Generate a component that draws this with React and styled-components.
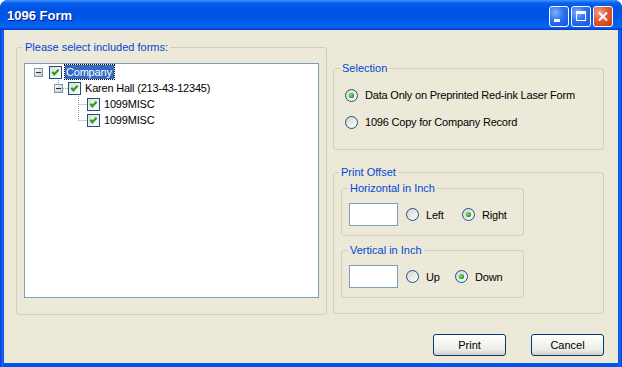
import React from 'react';
import styled, { createGlobalStyle } from 'styled-components';

const GlobalStyle = createGlobalStyle`
  html, body { margin: 0; padding: 0; background: #fff; }
  body { font-family: "Liberation Sans", Arial, sans-serif; font-size: 11px; color: #000; }
  * { box-sizing: border-box; }
`;

const Window = styled.div`
  width: 622px;
  height: 367px;
  display: flex;
  flex-direction: column;
  background: linear-gradient(to right, #0831D9 0, #166AEE 2px, #0055EA 4px, #0055EA 618px, #166AEE 620px, #0831D9 622px);
  border-radius: 8px 8px 0 0;
  overflow: hidden;
`;

const TitleBar = styled.div`
  height: 30px;
  flex: none;
  display: flex;
  align-items: center;
  justify-content: space-between;
  padding: 0 9px 0 7px;
  background: linear-gradient(to bottom, #3D95FF 0, #0A5FEE 3px, #0054E3 8px, #0055E5 18px, #0461F0 25px, #0A66F5 27px, #0047D8 29px, #0039C8 30px);
`;

const TitleText = styled.div`
  color: #fff;
  font: bold 13px "Liberation Sans", Arial, sans-serif;
  text-shadow: 1px 1px 0 #0A1883;
  padding-top: 1px;
`;

const CaptionButtons = styled.div`
  display: flex;
  gap: 2px;
  padding-top: 2px;
`;

const CaptionButton = styled.div`
  width: 20px;
  height: 21px;
  border: 1px solid #fff;
  border-radius: 3px;
  display: flex;
  align-items: center;
  justify-content: center;
  background: ${p => p.$close
    ? 'radial-gradient(circle at 30% 30%, #F0A48A 0, #E15B34 45%, #C2351A 100%)'
    : 'radial-gradient(circle at 30% 30%, #7FB2FF 0, #2B72F2 45%, #1650DA 100%)'};
`;

const Client = styled.div`
  flex: 1;
  margin: 0 4px 4px;
  background: #ECE9D8;
  display: flex;
  flex-direction: column;
`;

const Body = styled.div`
  display: flex;
  gap: 6px;
  padding: 11px 14px 0 12px;
`;

const GroupBox = styled.fieldset`
  margin: 0;
  min-width: 0;
  width: ${p => p.$w}px;
  height: ${p => p.$h}px;
  padding: ${p => p.$pad};
  border: 1px solid #D0D0BF;
  border-radius: 3px;
`;

const Legend = styled.legend`
  color: #0046D5;
  padding: 0 2px;
  margin-left: ${p => p.$ml ?? -1}px;
  line-height: 13px;
  font-size: 11px;
`;

const TreeBox = styled.div`
  height: 235px;
  background: #fff;
  border: 1px solid #7F9DB9;
`;

const TreeRow = styled.div`
  display: flex;
  align-items: center;
  height: 16px;
  padding-left: ${p => 5 + p.$level * 19}px;
`;

const NodeLabel = styled.span`
  margin-left: 3px;
  padding: 0 2px 0 1px;
  line-height: 14px;
  white-space: nowrap;
  font-size: 11px;
  letter-spacing: -0.2px;
  background: ${p => (p.$selected ? '#316AC5' : 'transparent')};
  color: ${p => (p.$selected ? '#fff' : '#000')};
  outline: ${p => (p.$selected ? '1px dotted #000' : 'none')};
`;

const RightColumn = styled.div`
  width: 271px;
  display: flex;
  flex-direction: column;
  gap: 16px;
  padding-top: 21px;
`;

const RadioList = styled.div`
  display: flex;
  flex-direction: column;
  gap: 11px;
`;

const Option = styled.label`
  display: flex;
  align-items: center;
  gap: 7px;
  height: 16px;
  width: ${p => (p.$w ? `${p.$w}px` : 'auto')};
  white-space: nowrap;
  font-size: 11px;
  letter-spacing: -0.2px;
`;

const Stack = styled.div`
  display: flex;
  flex-direction: column;
  gap: 8px;
`;

const OffsetRow = styled.div`
  display: flex;
  align-items: center;
  gap: 8px;
`;

const TextBox = styled.div`
  width: 49px;
  height: 23px;
  background: #fff;
  border: 1px solid #7F9DB9;
`;

const ButtonRow = styled.div`
  margin-top: auto;
  display: flex;
  justify-content: flex-end;
  gap: 25px;
  padding: 0 14px 7px 0;
`;

const Button = styled.div`
  width: 73px;
  height: 22px;
  border: 1px solid #003C74;
  border-radius: 3px;
  background: linear-gradient(to bottom, #FFFFFF 0, #F4F4F0 40%, #ECEBE6 75%, #D6D0C5 100%);
  display: flex;
  align-items: center;
  justify-content: center;
  font-size: 11px;
`;

function CheckBox() {
  return (
    <svg width="13" height="13" viewBox="0 0 13 13" style={{ flex: 'none' }}>
      <defs>
        <linearGradient id="cbg" x1="0" y1="0" x2="1" y2="1">
          <stop offset="0" stopColor="#DCDCD7" />
          <stop offset="1" stopColor="#FFFFFF" />
        </linearGradient>
      </defs>
      <rect x="0.5" y="0.5" width="12" height="12" fill="url(#cbg)" stroke="#1C5180" />
      <polyline points="3.3,5.8 5.3,8.3 9.6,3.8" fill="none" stroke="#21A121" strokeWidth="2.2" />
    </svg>
  );
}

function Radio({ checked }) {
  return (
    <svg width="13" height="13" viewBox="0 0 13 13" style={{ flex: 'none' }}>
      <defs>
        <linearGradient id="rbg" x1="0" y1="0" x2="1" y2="1">
          <stop offset="0" stopColor="#D4D4CC" />
          <stop offset="1" stopColor="#FFFFFF" />
        </linearGradient>
        <radialGradient id="rdot" cx="0.4" cy="0.4" r="0.6">
          <stop offset="0" stopColor="#7CE07A" />
          <stop offset="1" stopColor="#1E9A1E" />
        </radialGradient>
      </defs>
      <circle cx="6.5" cy="6.5" r="6" fill="url(#rbg)" stroke="#1C5180" />
      {checked && <circle cx="6.5" cy="6.5" r="2.6" fill="url(#rdot)" />}
    </svg>
  );
}

function Branch({ kind, last }) {
  // kind: 'root' | 'expander' | 'leaf'
  return (
    <svg width="19" height="16" viewBox="0 0 19 16" style={{ flex: 'none' }}>
      <defs>
        <linearGradient id="exg" x1="0" y1="0" x2="1" y2="1">
          <stop offset="0" stopColor="#FFFFFF" />
          <stop offset="1" stopColor="#C6C5B5" />
        </linearGradient>
      </defs>
      {kind === 'expander' && (
        <path d="M9.5 0V4 M14 8.5H19" stroke="#A0A0A0" strokeDasharray="1 1" />
      )}
      {kind === 'leaf' && (
        <path d={`M10.5 0V${last ? 8.5 : 16} M10.5 8.5H19`} stroke="#A0A0A0" strokeDasharray="1 1" />
      )}
      {kind !== 'leaf' && (
        <g transform={`translate(${kind === 'root' ? 4 : 5},4)`}>
          <rect x="0.5" y="0.5" width="8" height="8" fill="url(#exg)" stroke="#7898B5" />
          <path d="M2 4.5H7" stroke="#1C2B55" />
        </g>
      )}
    </svg>
  );
}

const tree = [
  { level: 0, kind: 'root', text: 'Company', selected: true },
  { level: 1, kind: 'expander', text: 'Karen Hall (213-43-12345)' },
  { level: 2, kind: 'leaf', text: '1099MISC' },
  { level: 2, kind: 'leaf', text: '1099MISC', last: true },
];

export default function App() {
  return (
    <>
      <GlobalStyle />
      <Window>
        <TitleBar>
          <TitleText>1096 Form</TitleText>
          <CaptionButtons>
            <CaptionButton>
              <svg width="18" height="19" viewBox="0 0 18 19">
                <rect x="4" y="12" width="6" height="3" fill="#fff" />
              </svg>
            </CaptionButton>
            <CaptionButton>
              <svg width="18" height="19" viewBox="0 0 18 19">
                <rect x="4.5" y="4.5" width="9" height="9" fill="none" stroke="#fff" />
                <rect x="4" y="4" width="10" height="3" fill="#fff" />
              </svg>
            </CaptionButton>
            <CaptionButton $close>
              <svg width="18" height="19" viewBox="0 0 18 19">
                <path d="M5 5.5L13 13.5M13 5.5L5 13.5" stroke="#fff" strokeWidth="2" />
              </svg>
            </CaptionButton>
          </CaptionButtons>
        </TitleBar>
        <Client>
          <Body>
            <GroupBox $w={311} $h={274} $pad="9px 7px 0 7px">
              <Legend>Please select included forms:</Legend>
              <TreeBox>
                {tree.map((n, i) => (
                  <TreeRow key={i} $level={n.level}>
                    <Branch kind={n.kind} last={n.last} />
                    <CheckBox />
                    <NodeLabel $selected={n.selected}>{n.text}</NodeLabel>
                  </TreeRow>
                ))}
              </TreeBox>
            </GroupBox>
            <RightColumn>
              <GroupBox $w={271} $h={88} $pad="12px 11px 0 11px">
                <Legend $ml={-5}>Selection</Legend>
                <RadioList>
                  <Option><Radio checked />Data Only on Preprinted Red-ink Laser Form</Option>
                  <Option><Radio />1096 Copy for Company Record</Option>
                </RadioList>
              </GroupBox>
              <GroupBox $w={271} $h={148} $pad="3px 7px 0 7px">
                <Legend $ml={-2}>Print Offset</Legend>
                <Stack>
                  <GroupBox $w={183} $h={54} $pad="8px 7px 0 7px">
                    <Legend>Horizontal in Inch</Legend>
                    <OffsetRow>
                      <TextBox />
                      <Option $w={48}><Radio />Left</Option>
                      <Option><Radio checked />Right</Option>
                    </OffsetRow>
                  </GroupBox>
                  <GroupBox $w={183} $h={54} $pad="8px 7px 0 7px">
                    <Legend>Vertical in Inch</Legend>
                    <OffsetRow>
                      <TextBox />
                      <Option $w={41}><Radio />Up</Option>
                      <Option><Radio checked />Down</Option>
                    </OffsetRow>
                  </GroupBox>
                </Stack>
              </GroupBox>
            </RightColumn>
          </Body>
          <ButtonRow>
            <Button>Print</Button>
            <Button>Cancel</Button>
          </ButtonRow>
        </Client>
      </Window>
    </>
  );
}
